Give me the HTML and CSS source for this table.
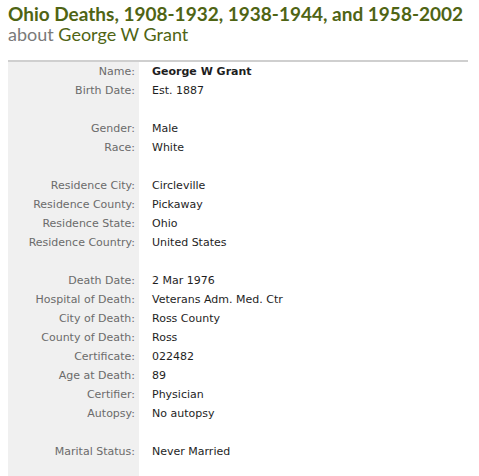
FILE: index.html
```html
<!DOCTYPE html>
<html lang="en">
<head>
    <meta charset="UTF-8">
    <title>Ohio Deaths - George W Grant</title>
    <link rel="stylesheet" href="styles.css">
</head>
<body>
    <div class="record">
        <h1>Ohio Deaths, 1908-1932, 1938-1944, and 1958-2002</h1>
        <h2><span class="about">about</span> George W Grant</h2>

        <table class="details">
            <tr><td class="label">Name:</td><td class="value"><b>George W Grant</b></td></tr>
            <tr><td class="label">Birth Date:</td><td class="value">Est. 1887</td></tr>
            <tr class="spacer"><td class="label"></td><td></td></tr>
            <tr><td class="label">Gender:</td><td class="value">Male</td></tr>
            <tr><td class="label">Race:</td><td class="value">White</td></tr>
            <tr class="spacer"><td class="label"></td><td></td></tr>
            <tr><td class="label">Residence City:</td><td class="value">Circleville</td></tr>
            <tr><td class="label">Residence County:</td><td class="value">Pickaway</td></tr>
            <tr><td class="label">Residence State:</td><td class="value">Ohio</td></tr>
            <tr><td class="label">Residence Country:</td><td class="value">United States</td></tr>
            <tr class="spacer"><td class="label"></td><td></td></tr>
            <tr><td class="label">Death Date:</td><td class="value">2 Mar 1976</td></tr>
            <tr><td class="label">Hospital of Death:</td><td class="value">Veterans Adm. Med. Ctr</td></tr>
            <tr><td class="label">City of Death:</td><td class="value">Ross County</td></tr>
            <tr><td class="label">County of Death:</td><td class="value">Ross</td></tr>
            <tr><td class="label">Certificate:</td><td class="value">022482</td></tr>
            <tr><td class="label">Age at Death:</td><td class="value">89</td></tr>
            <tr><td class="label">Certifier:</td><td class="value">Physician</td></tr>
            <tr><td class="label">Autopsy:</td><td class="value">No autopsy</td></tr>
            <tr class="spacer"><td class="label"></td><td></td></tr>
            <tr><td class="label">Marital Status:</td><td class="value">Never Married</td></tr>
            <tr class="spacer"><td class="label"></td><td></td></tr>
        </table>
    </div>
</body>
</html>
```

FILE: styles.css
```css
body {
    margin: 0;
    padding: 0;
    background: #fff;
    font-family: 'DejaVu Sans', Verdana, sans-serif;
}
.record {
    padding: 3px 11px 0 8px;
}
h1, h2 {
    margin: 0;
    font-family: Lato, 'Open Sans', sans-serif;
    font-size: 19px;
    font-weight: normal;
    color: #4f6414;
    line-height: 21px;
    white-space: nowrap;
}
h1 {
    font-weight: bold;
}
h2 {
    font-size: 18px;
}
.about {
    color: #7a7a7a;
}
.details {
    width: 100%;
    margin-top: 15px;
    border-collapse: collapse;
    border-top: 2px solid #cfcfcf;
    font-size: 11px;
}
.details td {
    height: 19px;
    padding: 0;
    vertical-align: middle;
}
.label {
    width: 131px;
    background: #f0f0f0;
    color: #6b6b6b;
    text-align: right;
    padding-right: 4px !important;
    box-sizing: border-box;
}
.value {
    padding-left: 13px !important;
    color: #1e1e1e;
}
.spacer td {
    height: 19px;
}
```
